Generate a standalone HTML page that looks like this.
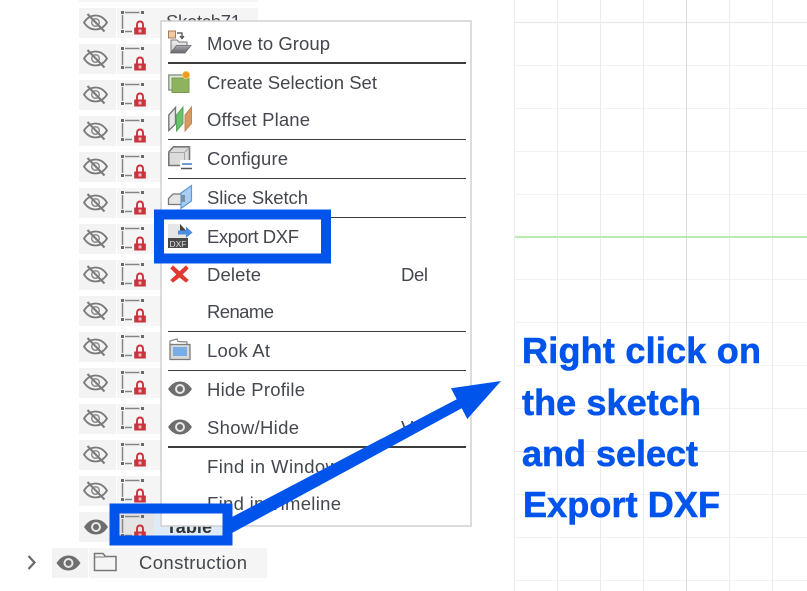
<!DOCTYPE html>
<html><head><meta charset="utf-8"><style>
html,body{margin:0;padding:0;background:#fff;width:807px;height:591px;overflow:hidden}
svg{display:block}
.m{font:18.500px "Liberation Sans",sans-serif;fill:#44484e}
.b{font:bold 36px "Liberation Sans",sans-serif;fill:#0054ec;stroke:#0054ec;stroke-width:.6}
</style></head><body>
<svg width="807" height="591" viewBox="0 0 807 591" xmlns="http://www.w3.org/2000/svg">
<defs>
<linearGradient id="fold" x1="0" y1="0" x2="0" y2="1"><stop offset="0" stop-color="#a8abb0"/><stop offset="1" stop-color="#63676d"/></linearGradient>
<linearGradient id="fb" x1="0" y1="0" x2="0" y2="1"><stop offset="0" stop-color="#f0f0f0"/><stop offset="1" stop-color="#c8c8c8"/></linearGradient>
<g id="eye"><path d="M-12 0C-8-6-4-7.500 0-7.500S8-6 12 0C8 6 4 7.500 0 7.500S-8 6-12 0Z" fill="#6e6e6e"/><circle r="5" fill="#e8e8e8"/><circle r="3" fill="#6e6e6e"/></g>
<g id="eyeoff" fill="none" stroke="#7a7a7a"><path d="M-11.500 0C-8-5.500-4-7 0-7S8-5.500 11.500 0C8 5.500 4 7 0 7S-8 5.500-11.500 0Z" stroke-width="1.800"/><circle r="3.800" stroke-width="1.500" stroke="#8c8c8c"/><path d="M-8-8.500L9 9" stroke-width="2"/></g>
<g id="sk"><g fill="none" stroke="#858585" stroke-width="1.500"><path d="M-12-9.500H2.500M-14.500-7V7M-12 9.500H-5"/></g>
<g fill="#6a6a6a"><rect x="-16" y="-11" width="3" height="3"/><rect x="4" y="-11" width="3" height="3"/><rect x="-16" y="8" width="3" height="3"/></g>
<path d="M0 6V3C0 .5 1.200-.5 3-.5S6 .5 6 3V6" fill="none" stroke="#c8333c" stroke-width="1.900"/>
<rect x="-2.800" y="5.500" width="11.600" height="7" fill="#c8333c"/><rect x="1.500" y="7.500" width="3" height="3" fill="#f0b8bb"/></g>
<g id="row"><rect x="79" y="-15" width="37" height="30" fill="#f3f3f3"/><rect x="117" y="-15" width="141" height="30" fill="#f5f5f5"/></g>
</defs>

<!-- grid -->
<g fill="none">
<path d="M515 22.500H807" stroke="#e8e8e8" stroke-width="1.300"/>
<path d="M515 65.500H807M515 108.500H807M515 151.500H807M515 194.500H807M515 279.500H807M515 322.500H807M515 365.500H807M515 408.500H807M515 494.500H807M515 537.500H807M515 580.500H807" stroke="#f2f2f2" stroke-width="1.100"/>
<path d="M515 451.500H807" stroke="#e8e8e8" stroke-width="1.100"/>
<path d="M514.500 0V591M557.500 0V591M600.500 0V591M643.500 0V591M729.500 0V591M772.500 0V591" stroke="#ececec" stroke-width="1.100"/>
<path d="M686.500 0V591" stroke="#dcdcdc" stroke-width="1.100"/>
</g>
<rect x="515" y="236" width="292" height="2" fill="#bbe9b0"/>

<!-- tree rows -->
<rect x="79" y="-30" width="179" height="32" fill="#f5f5f5"/>
<g>
<use href="#row" y="23"/><use href="#row" y="59"/><use href="#row" y="95"/><use href="#row" y="131"/><use href="#row" y="167"/><use href="#row" y="203"/><use href="#row" y="239"/><use href="#row" y="275"/><use href="#row" y="311"/><use href="#row" y="347"/><use href="#row" y="383"/><use href="#row" y="419"/><use href="#row" y="455"/><use href="#row" y="491"/>
</g>
<g>
<use href="#eyeoff" x="95.500" y="22.500"/><use href="#eyeoff" x="95.500" y="58.500"/><use href="#eyeoff" x="95.500" y="94.500"/><use href="#eyeoff" x="95.500" y="130.500"/><use href="#eyeoff" x="95.500" y="166.500"/><use href="#eyeoff" x="95.500" y="202.500"/><use href="#eyeoff" x="95.500" y="238.500"/><use href="#eyeoff" x="95.500" y="274.500"/><use href="#eyeoff" x="95.500" y="310.500"/><use href="#eyeoff" x="95.500" y="346.500"/><use href="#eyeoff" x="95.500" y="382.500"/><use href="#eyeoff" x="95.500" y="418.500"/><use href="#eyeoff" x="95.500" y="454.500"/><use href="#eyeoff" x="95.500" y="490.500"/>
<use href="#sk" x="137" y="22"/><use href="#sk" x="137" y="58"/><use href="#sk" x="137" y="94"/><use href="#sk" x="137" y="130"/><use href="#sk" x="137" y="166"/><use href="#sk" x="137" y="202"/><use href="#sk" x="137" y="238"/><use href="#sk" x="137" y="274"/><use href="#sk" x="137" y="310"/><use href="#sk" x="137" y="346"/><use href="#sk" x="137" y="382"/><use href="#sk" x="137" y="418"/><use href="#sk" x="137" y="454"/><use href="#sk" x="137" y="490"/>
</g>
<text class="m" x="166" y="28" textLength="75" lengthAdjust="spacing">Sketch71</text>

<!-- Table row -->
<rect x="79" y="512" width="37" height="30" fill="#f3f3f3"/>
<rect x="119" y="512" width="35" height="26" fill="#e4e4e4"/>
<rect x="154" y="512" width="70" height="26" fill="#dcebf7"/>
<use href="#eye" x="96" y="527"/>
<use href="#sk" x="137" y="526"/>
<text x="166" y="533" textLength="46" style="font:bold 18px 'Liberation Sans',sans-serif;fill:#333">Table</text>

<!-- Construction -->
<rect x="52" y="548" width="36" height="30" fill="#f3f3f3"/>
<rect x="89" y="548" width="178" height="30" fill="#f5f5f5"/>
<path d="M28.500 556L34.500 562.500L28.500 569" fill="none" stroke="#6a6a6a" stroke-width="2.200"/>
<use href="#eye" x="68.500" y="563"/>
<path d="M94.500 570.500V553.500H103L105.500 556.500H116V570.500Z" fill="none" stroke="#777" stroke-width="1.500"/>
<path d="M94.500 557H105" fill="none" stroke="#777" stroke-width="1"/>
<text class="m" x="139" y="569" textLength="108">Construction</text>

<!-- menu -->
<rect x="161" y="21" width="310" height="505" fill="#fff" stroke="#d0d0d0" stroke-width="1.500"/>
<g fill="#3c3c3c">
<rect x="168" y="62" width="298" height="2"/>
<rect x="168" y="139" width="298" height="1"/>
<rect x="168" y="178" width="298" height="1"/>
<rect x="168" y="217" width="298" height="1"/>
<rect x="168" y="331" width="298" height="1"/>
<rect x="168" y="370" width="298" height="1"/>
<rect x="168" y="446" width="298" height="2"/>
</g>
<g>
<text class="m" x="207" y="50" textLength="123">Move to Group</text>
<text class="m" x="207" y="89" textLength="170">Create Selection Set</text>
<text class="m" x="207" y="126" textLength="103">Offset Plane</text>
<text class="m" x="207" y="165" textLength="81">Configure</text>
<text class="m" x="207" y="204" textLength="101">Slice Sketch</text>
<text class="m" x="207" y="243" textLength="92">Export DXF</text>
<text class="m" x="207" y="281" textLength="54">Delete</text>
<text class="m" x="401" y="281" textLength="27">Del</text>
<text class="m" x="207" y="318" textLength="67">Rename</text>
<text class="m" x="207" y="357" textLength="63">Look At</text>
<text class="m" x="207" y="396" textLength="98">Hide Profile</text>
<text class="m" x="207" y="434" textLength="92">Show/Hide</text>
<text class="m" x="401" y="434" textLength="12">V</text>
<text class="m" x="207" y="473" textLength="132">Find in Window</text>
<text class="m" x="207" y="510" textLength="134">Find in Timeline</text>
</g>

<!-- menu icons -->
<!-- move to group -->
<rect x="168.500" y="31" width="7" height="7" fill="#f0c9a6" stroke="#a87b58"/>
<path d="M177 33H182V37M180 36L182 38.500L184 36" fill="none" stroke="#444" stroke-width="1.200"/>
<path d="M171 52V40H177L179 42H187V47H177L171 52Z" fill="url(#fb)" stroke="#777"/>
<path d="M170.500 53L176.500 45.500H191L185 53Z" fill="url(#fold)" stroke="#666" stroke-width=".8"/>
<!-- selection set -->
<rect x="168.800" y="75" width="17" height="15" fill="#e3e9de" stroke="#7e8e78" stroke-width="1.300"/>
<rect x="172" y="78" width="17" height="14.500" fill="#8fb25f" stroke="#7a9a52"/>
<circle cx="186" cy="75" r="3.600" fill="#ef9a1a" stroke="#f0d070"/>
<!-- offset plane -->
<path d="M168.800 130.500V115L175.500 107.500V124Z" fill="#e8e8e8" stroke="#777" stroke-width="1.400"/>
<path d="M176.500 131V115L183 107V123.500Z" fill="#6cc06e" stroke="#58a85c"/>
<path d="M185 131V115L191.500 107V123.500Z" fill="#d69a62" stroke="#c08750"/>
<!-- configure -->
<path d="M168.800 152L173.500 146.800H189.500V165.500H168.800Z" fill="#dcdcdc" stroke="#777" stroke-width="1.600"/>
<path d="M189.500 147L184.500 152.500H169M184.500 152.500V165" fill="none" stroke="#a5a5a5"/>
<rect x="180" y="160" width="13.500" height="11" fill="#fff"/>
<path d="M182 164H192" stroke="#3b7fc4" stroke-width="1.500"/><path d="M181 168.500H192" stroke="#555" stroke-width="1.500"/>
<!-- slice sketch -->
<path d="M168.500 204.500V198.500L173 194H182V204.500Z" fill="#e5e5e5" stroke="#777" stroke-width="1.300"/>
<path d="M181 193L191.500 185.500V201L181 208.500Z" fill="#a9cdf0" stroke="#5a9ad8" stroke-width="1.200"/>
<rect x="181" y="195" width="4" height="7" fill="#7b8ea3"/>

<!-- blue rect 1 -->
<rect x="159" y="214.500" width="167" height="44" fill="none" stroke="#0054ec" stroke-width="10"/>
<!-- export dxf icon -->
<path d="M168 224H180L187 231V248H168Z" fill="#e6e6e6"/>
<path d="M180 224L186 230.500H180Z" fill="#444"/>
<path d="M178 230.500H186V226.500L192.500 232.500L186 238V234.500H178Z" fill="#4b8fe2"/>
<rect x="168" y="238" width="20" height="10" fill="#4a4a4a"/>
<text x="169.500" y="247" font-family="Liberation Sans, sans-serif" font-size="8.500" fill="#e0e0e0" textLength="17">DXF</text>

<!-- delete -->
<path d="M173 266L179.500 272L186 266L188 268.500L182 274.500L188 280L186 282L179.500 277L173 282L171 280L177 274.500L171 268.500Z" fill="#e03a32" stroke="#e03a32"/>
<!-- look at -->
<path d="M170 345V341L177 339L178 341.500L187 342V345" fill="none" stroke="#8a8a8a" stroke-width="1.300"/>
<rect x="170" y="344.500" width="20" height="15" fill="#d9d9d9" stroke="#7d7d7d" stroke-width="1.300"/>
<rect x="173" y="347" width="14" height="9" fill="#78aee6"/>
<!-- eyes -->
<use href="#eye" x="180" y="389"/>
<use href="#eye" x="180" y="427"/>

<!-- blue rect 2 -->
<rect x="114.500" y="508.500" width="113" height="32" fill="none" stroke="#0054ec" stroke-width="10"/>
<!-- arrow -->
<polygon points="232,517 456.700,399.300 451,388.300 501,381 467.300,419 461.700,408.300 232,533" fill="#0054ec"/>

<!-- annotation -->
<text class="b" x="522" y="363" textLength="239">Right click on</text>
<text class="b" x="522" y="415" textLength="179">the sketch</text>
<text class="b" x="522" y="466" textLength="176">and select</text>
<text class="b" x="523" y="517" textLength="197">Export DXF</text>
</svg>
</body></html>
